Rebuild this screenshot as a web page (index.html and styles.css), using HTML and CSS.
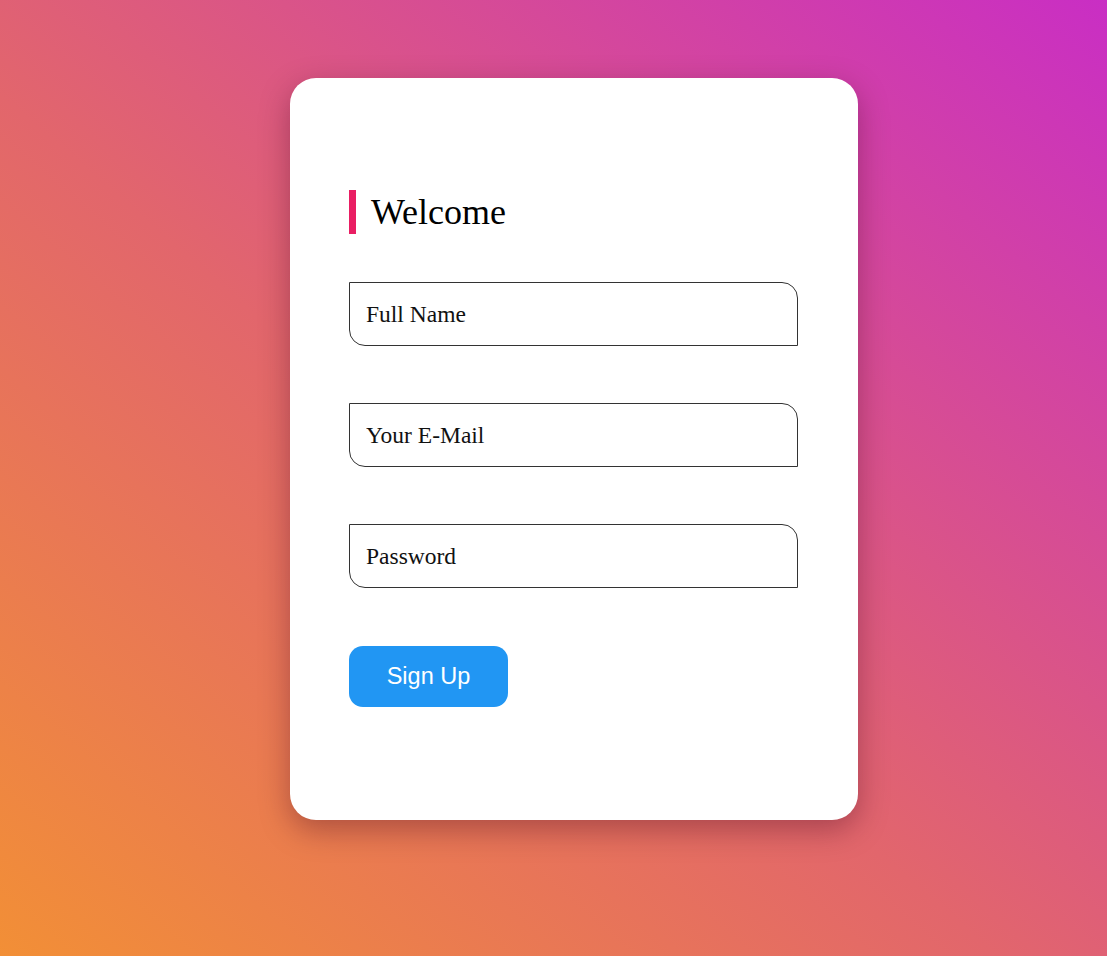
FILE: index.html
```html
<!DOCTYPE html>
<html>
<head>
<meta charset="utf-8">
<link rel="stylesheet" href="styles.css">
</head>
<body>
<div class="page">
  <form class="card">
    <h2 class="title">Welcome</h2>
    <input class="field" type="text" placeholder="Full Name">
    <input class="field" type="email" placeholder="Your E-Mail">
    <input class="field" type="password" placeholder="Password">
    <button class="btn" type="button">Sign Up</button>
  </form>
</div>
</body>
</html>
```
FILE: styles.css
```css
html, body {
  margin: 0;
  height: 100%;
}
body {
  background: linear-gradient(to top right, #f28f36 0%, #e2666c 45%, #c92ec4 100%);
  font-family: "Liberation Serif", serif;
}
.page {
  padding: 78px 0 0 290px;
}
.card {
  box-sizing: border-box;
  width: 568px;
  height: 742px;
  background: #fff;
  border-radius: 26px;
  box-shadow: 0 10px 30px rgba(60, 0, 30, 0.35);
  padding: 112px 59px 0 59px;
  display: flex;
  flex-direction: column;
  align-items: flex-start;
}
.title {
  margin: 0 0 48px 0;
  font-weight: normal;
  font-size: 36px;
  line-height: 44px;
  height: 44px;
  border-left: 7px solid #e91e63;
  padding-left: 15px;
  color: #000;
}
.field {
  box-sizing: border-box;
  width: 449px;
  height: 64px;
  margin: 0 0 57px 0;
  padding: 0 16px;
  border: 1px solid #333;
  border-radius: 0 16px 0 16px;
  font-family: "Liberation Serif", serif;
  font-size: 23.5px;
  color: #000;
  outline: none;
}
.field::placeholder {
  color: #111;
}
.btn {
  width: 159px;
  height: 61px;
  margin-top: 1px;
  border: none;
  border-radius: 14px;
  background: #2196f3;
  color: #fff;
  font-family: "Liberation Sans", Arial, sans-serif;
  font-size: 23.5px;
  cursor: pointer;
}
```
